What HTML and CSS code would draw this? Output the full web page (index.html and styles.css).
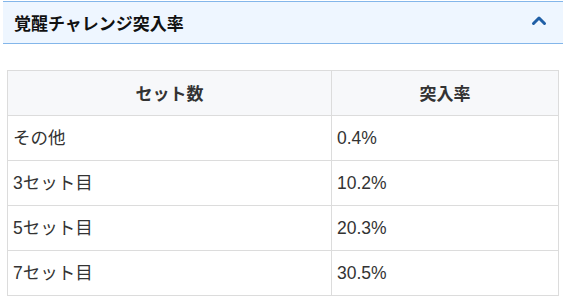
FILE: index.html
```html
<!DOCTYPE html>
<html lang="ja">
<head>
<meta charset="utf-8">
<link rel="stylesheet" href="styles.css">
</head>
<body>
<div class="acc-head">
  <h3 class="acc-title">覚醒チャレンジ突入率</h3>
  <svg class="chev" width="16" height="11" viewBox="0 0 16 11"><path d="M2.5 8.5 L8 3 L13.5 8.5" fill="none" stroke="#1f5fa6" stroke-width="3" stroke-linecap="round" stroke-linejoin="round"/></svg>
</div>
<table class="rate">
  <thead>
    <tr><th class="c1">セット数</th><th>突入率</th></tr>
  </thead>
  <tbody>
    <tr><td>その他</td><td>0.4%</td></tr>
    <tr><td>3セット目</td><td>10.2%</td></tr>
    <tr><td>5セット目</td><td>20.3%</td></tr>
    <tr><td>7セット目</td><td>30.5%</td></tr>
  </tbody>
</table>
</body>
</html>
```

FILE: styles.css
```css
html, body {
  margin: 0;
  padding: 0;
  background: #fff;
  font-family: "Liberation Sans", Arial, "Noto Sans CJK JP", sans-serif;
  color: #333;
}
.acc-head {
  margin: 1px 3px 0 3px;
  height: 41px;
  background: #eef6ff;
  border-top: 1px solid #83b6ea;
  border-bottom: 1px solid #83b6ea;
  display: flex;
  align-items: center;
  justify-content: space-between;
  padding: 0 16px 0 11px;
}
.acc-title {
  margin: 0;
  font-size: 17px;
  font-weight: bold;
  color: #111;
  font-family: "Noto Sans CJK JP", sans-serif;
}
.chev {
  display: block;
  margin-top: -4px;
}
.rate {
  margin: 26px 0 0 7px;
  width: 552px;
  border-collapse: collapse;
  table-layout: fixed;
}
.rate th, .rate td {
  border: 1px solid #dcdcdc;
  height: 45px;
  box-sizing: border-box;
  padding: 0 5px;
  font-size: 17.5px;
  line-height: 24px;
}
.rate th {
  background: #f7f8fa;
  font-weight: bold;
  font-size: 17px;
  text-align: center;
  color: #333;
  font-family: "Noto Sans CJK JP", sans-serif;
}
.rate th.c1 {
  width: 324px;
}
.rate td {
  text-align: left;
  color: #333;
}
```
